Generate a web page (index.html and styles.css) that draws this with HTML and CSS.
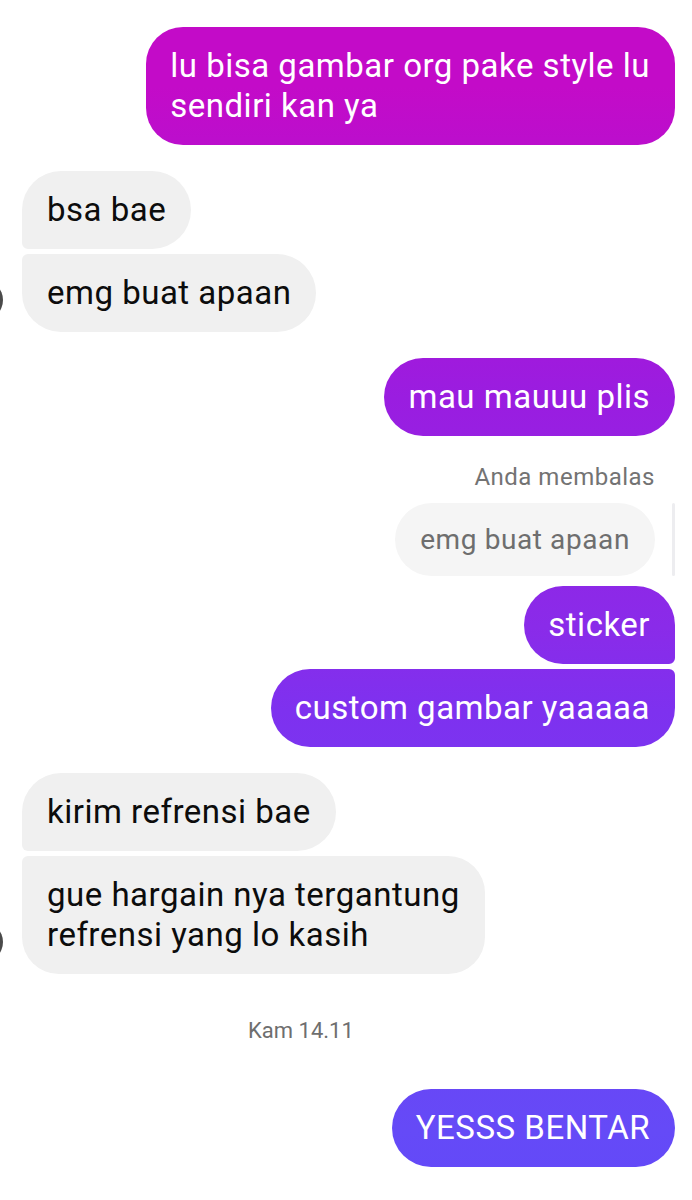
FILE: index.html
```html
<!DOCTYPE html>
<html lang="id">
<head>
<meta charset="utf-8">
<title>Chat</title>
<link rel="stylesheet" href="styles.css">
</head>
<body>
<main class="chat">
  <div class="row out">
    <div class="bubble mine single two">lu bisa gambar org pake style lu<br>sendiri kan ya</div>
  </div>

  <div class="group in gap-lg">
    <div class="avatar"></div>
    <div class="stack">
      <div class="bubble theirs first">bsa bae</div>
      <div class="bubble theirs last">emg buat apaan</div>
    </div>
  </div>

  <div class="row out gap-lg">
    <div class="bubble mine single">mau mauuu plis</div>
  </div>

  <div class="reply-label">Anda membalas</div>
  <div class="reply-row">
    <div class="reply-bubble">emg buat apaan</div>
    <div class="reply-bar"></div>
  </div>

  <div class="stack right gap-sm">
    <div class="bubble mine m-first">sticker</div>
    <div class="bubble mine m-last">custom gambar yaaaaa</div>
  </div>

  <div class="group in gap-lg">
    <div class="avatar"></div>
    <div class="stack">
      <div class="bubble theirs first">kirim refrensi bae</div>
      <div class="bubble theirs last two">gue hargain nya tergantung<br>refrensi yang lo kasih</div>
    </div>
  </div>

  <div class="date">Kam 14.11</div>

  <div class="row out">
    <div class="bubble mine single caps">YESSS BENTAR</div>
  </div>
</main>
</body>
</html>
```

FILE: styles.css
```css
* { box-sizing: border-box; }

html, body {
  margin: 0;
  padding: 0;
  background: #ffffff;
}

body {
  font-family: Roboto, "Noto Sans", "Liberation Sans", sans-serif;
  overflow: hidden;
}

.chat {
  display: flex;
  flex-direction: column;
  padding: 27px 17px 0 0;
  width: 692px;
}

.row {
  display: flex;
}

.row.out {
  justify-content: flex-end;
}

.gap-lg { margin-top: 26px; }
.gap-sm { margin-top: 10px; }

.group {
  display: flex;
  align-items: flex-end;
}

.avatar {
  width: 40px;
  height: 40px;
  border-radius: 50%;
  background: #4a4a4a;
  margin-left: -37px;
  margin-right: 19px;
  margin-bottom: 12px;
  flex: none;
}

.stack {
  display: flex;
  flex-direction: column;
  align-items: flex-start;
  gap: 5px;
}

.stack.right {
  align-items: flex-end;
}

.bubble {
  font-size: 33px;
  letter-spacing: 0.5px;
  line-height: 40px;
  padding: 19px 25px;
  border-radius: 39px;
  white-space: nowrap;
}

.bubble.two {
  border-radius: 37px;
}

.bubble.theirs {
  background: #f0f0f0;
  color: #0c0c0c;
}

.bubble.theirs.first { border-bottom-left-radius: 6px; }
.bubble.theirs.last { border-top-left-radius: 6px; }

.bubble.mine {
  color: #ffffff;
  background-image: linear-gradient(to bottom,
    #c30bc8 0px,
    #c30bc8 87px,
    #9a1de0 398px,
    #8a2be9 627px,
    #7e31ef 710px,
    #654af7 1130px,
    #6249f8 1200px);
  background-attachment: fixed;
  padding-left: 24px;
}

.bubble.mine.m-first { border-bottom-right-radius: 6px; }
.bubble.mine.m-last { border-top-right-radius: 6px; }

.reply-label {
  align-self: flex-end;
  margin-top: 27px;
  margin-right: 20px;
  font-size: 24px;
  letter-spacing: 0.5px;
  line-height: 28px;
  color: #737373;
}

.reply-row {
  display: flex;
  justify-content: flex-end;
  align-items: stretch;
  gap: 17px;
  margin-top: 12px;
}

.reply-bubble {
  background: #f5f5f5;
  color: #6e6e6e;
  font-size: 28px;
  letter-spacing: 0.6px;
  line-height: 37px;
  padding: 18px 25px;
  border-radius: 37px;
}

.reply-bar {
  width: 3px;
  background: #ededf0;
  border-radius: 2px;
}

.date {
  margin-top: 44px;
  margin-bottom: 45px;
  padding-left: 248px;
  font-size: 22px;
  line-height: 26px;
  color: #6e6e6e;
}
```
